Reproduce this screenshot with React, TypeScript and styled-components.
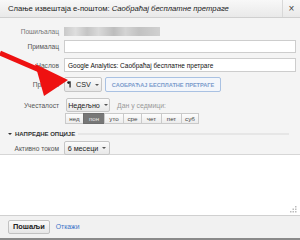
import React from "react";
import styled, { createGlobalStyle } from "styled-components";

const Global = createGlobalStyle`
  html, body {
    margin: 0;
    padding: 0;
    background: #fff;
  }
  body {
    font-family: "Liberation Sans", Arial, sans-serif;
  }
`;

const Dialog = styled.div`
  position: relative;
  width: 300px;
  height: 240px;
  display: flex;
  flex-direction: column;
  overflow: hidden;
  background: #f4f4f4;
`;

const Header = styled.div`
  height: 17px;
  display: flex;
  align-items: stretch;
  background: linear-gradient(#f8f8f8, #e9e9e9);
  border-bottom: 1px solid #cfcfcf;
`;

const Title = styled.div`
  flex: 1;
  display: flex;
  align-items: center;
  padding-left: 8px;
  font-size: 7.7px;
  color: #222;
  white-space: nowrap;

  em {
    margin-left: 2px;
  }
`;

const Close = styled.div`
  width: 17px;
  display: flex;
  align-items: center;
  justify-content: center;
  border-left: 1px solid #d8d8d8;
  font-size: 10px;
  color: #444;
`;

const Body = styled.div`
  padding: 8px 4px 0 0;
  height: 128px;
  border-bottom: 1px solid #d6d6d6;
`;

const Row = styled.div<{ $top: number; $h: number }>`
  display: grid;
  grid-template-columns: 59px 1fr;
  column-gap: 5px;
  align-items: center;
  margin-top: ${(p) => p.$top}px;
  height: ${(p) => p.$h}px;
`;

const Label = styled.div<{ $dim?: boolean }>`
  text-align: right;
  font-size: 6.6px;
  color: ${(p) => (p.$dim ? "#555" : "#777")};
  white-space: nowrap;
`;

const Blurred = styled.div`
  width: 96px;
  height: 9px;
  background: linear-gradient(
    90deg,
    #c9c9c9 0%,
    #dedede 12%,
    #c4c4c4 24%,
    #d9d9d9 36%,
    #bdbdbd 52%,
    #d4d4d4 64%,
    #c2c2c2 78%,
    #d0d0d0 100%
  );
  filter: blur(0.7px);
`;

const Input = styled.div`
  height: 100%;
  box-sizing: border-box;
  background: #fff;
  border: 1px solid #cdcdcd;
  display: flex;
  align-items: center;
  padding-left: 3px;
  font-size: 6.5px;
  color: #111;
  white-space: nowrap;
`;

const Inline = styled.div<{ $gap?: number }>`
  display: flex;
  align-items: center;
  gap: ${(p) => p.$gap ?? 3}px;
  height: 100%;
`;

const Button = styled.div<{ $w: number }>`
  width: ${(p) => p.$w}px;
  height: 100%;
  box-sizing: border-box;
  display: flex;
  align-items: center;
  justify-content: center;
  gap: 4px;
  border: 1px solid #c6c6c6;
  border-radius: 2px;
  background: linear-gradient(#fbfbfb, #e8e8e8);
  font-size: 7.2px;
  color: #222;
  white-space: nowrap;
`;

const TagButton = styled.div`
  width: 116px;
  height: 100%;
  box-sizing: border-box;
  display: flex;
  align-items: center;
  justify-content: center;
  border: 1px solid #a9c1e2;
  border-radius: 2px;
  background: #f3f6fb;
  font-size: 5.6px;
  font-weight: bold;
  color: #7d9ccc;
  white-space: nowrap;
`;

const Caret = styled.span`
  width: 0;
  height: 0;
  border-left: 2px solid transparent;
  border-right: 2px solid transparent;
  border-top: 2.5px solid #555;
`;

const Hint = styled.span`
  font-size: 6.9px;
  color: #999;
  margin-left: 7px;
`;

const Days = styled.div`
  display: flex;
  margin-left: 66px;
  height: 11px;
  margin-top: 1px;
`;

const Day = styled.div<{ $w: number; $on?: boolean }>`
  width: ${(p) => p.$w}px;
  box-sizing: border-box;
  display: flex;
  align-items: center;
  justify-content: center;
  border: 1px solid ${(p) => (p.$on ? "#6e6e6e" : "#cacaca")};
  margin-left: -1px;
  background: ${(p) => (p.$on ? "#777" : "linear-gradient(#fdfdfd, #ececec)")};
  font-size: 6.2px;
  color: ${(p) => (p.$on ? "#e6e6e6" : "#444")};
`;

const Section = styled.div`
  display: flex;
  align-items: center;
  gap: 3px;
  margin: 5px 7px 0 8px;
  height: 9px;
  font-size: 6px;
  font-weight: bold;
  color: #333;
  white-space: nowrap;

  &::after {
    content: "";
    flex: 1;
    height: 2px;
    background: #e6e6e6;
  }
`;

const SectionCaret = styled(Caret)`
  border-top-color: #333;
`;

const Message = styled.div`
  position: relative;
  flex: 1;
  background: #fff;
  border-bottom: 1px solid #d0d0d0;
`;

const Grip = styled.svg`
  position: absolute;
  right: 3px;
  bottom: 2px;
`;

const Footer = styled.div`
  height: 21px;
  display: flex;
  align-items: center;
  gap: 6px;
  padding: 0 0 1px 8px;
  background: #f1f1f1;
  border-bottom: 2px solid #8a8a8a;
`;

const Send = styled.div`
  height: 14px;
  padding: 0 4px;
  box-sizing: border-box;
  display: flex;
  align-items: center;
  border: 1px solid #c2c2c2;
  border-radius: 2px;
  background: linear-gradient(#fafafa, #e6e6e6);
  font-size: 7.4px;
  font-weight: bold;
  color: #222;
`;

const Cancel = styled.span`
  font-size: 6.8px;
  color: #3c73c8;
`;

const Arrow = styled.svg`
  position: absolute;
  left: 0;
  top: 0;
  pointer-events: none;
`;

const days: [string, number, boolean?][] = [
  ["нед", 19],
  ["пон", 22, true],
  ["уто", 20],
  ["сре", 19],
  ["чет", 21],
  ["пет", 21],
  ["суб", 18],
];

const App = () => {
  return (
    <Dialog>
      <Global />
      <Header>
        <Title>
          Слање извештаја е-поштом:<em>Саобраћај бесплатне претраге</em>
        </Title>
        <Close>×</Close>
      </Header>
      <Body>
        <Row $top={0} $h={11}>
          <Label>Пошиљалац</Label>
          <Blurred />
        </Row>
        <Row $top={3} $h={13}>
          <Label $dim>Прималац</Label>
          <Input />
        </Row>
        <Row $top={5} $h={14}>
          <Label $dim>Наслов</Label>
          <Input>Google Analytics: Саобраћај бесплатне претраге</Input>
        </Row>
        <Row $top={5} $h={15}>
          <Label $dim>Прилози</Label>
          <Inline>
            <Button $w={38}>
              <svg width="5" height="7" viewBox="0 0 5 7">
                <circle cx="1.6" cy="1.6" r="1.4" fill="#222" />
                <rect x="2.4" y="0.3" width="1.3" height="6.2" fill="#222" />
              </svg>
              CSV
              <Caret />
            </Button>
            <TagButton>САОБРАЋАЈ БЕСПЛАТНЕ ПРЕТРАГЕ</TagButton>
          </Inline>
        </Row>
        <Row $top={6} $h={14}>
          <Label $dim>Учесталост</Label>
          <Inline $gap={0}>
            <Button $w={44} style={{ marginLeft: 2 }}>
              Недељно
              <Caret />
            </Button>
            <Hint>Дан у седмици:</Hint>
          </Inline>
        </Row>
        <Days>
          {days.map(([d, w, on]) => (
            <Day key={d} $w={w} $on={on}>
              {d}
            </Day>
          ))}
        </Days>
        <Section>
          <SectionCaret />
          НАПРЕДНЕ ОПЦИЈЕ
        </Section>
        <Row $top={3} $h={14}>
          <Label $dim>Активно током</Label>
          <Inline>
            <Button $w={46}>
              6 месеци
              <Caret />
            </Button>
          </Inline>
        </Row>
      </Body>
      <Message>
        <Grip width="7" height="7" viewBox="0 0 7 7">
          <rect x="5" y="0" width="1.5" height="1.5" fill="#bbb" />
          <rect x="2.5" y="2.5" width="1.5" height="1.5" fill="#bbb" />
          <rect x="5" y="2.5" width="1.5" height="1.5" fill="#bbb" />
          <rect x="0" y="5" width="1.5" height="1.5" fill="#bbb" />
          <rect x="2.5" y="5" width="1.5" height="1.5" fill="#bbb" />
          <rect x="5" y="5" width="1.5" height="1.5" fill="#bbb" />
        </Grip>
      </Message>
      <Footer>
        <Send>Пошаљи</Send>
        <Cancel>Откажи</Cancel>
      </Footer>
      <Arrow width="300" height="240" viewBox="0 0 300 240">
        <line x1="0" y1="53" x2="44" y2="72" stroke="#ee1111" strokeWidth="5" />
        <polygon points="68,80 35,64 44,96" fill="#ee1111" />
      </Arrow>
    </Dialog>
  );
};

export default App;
